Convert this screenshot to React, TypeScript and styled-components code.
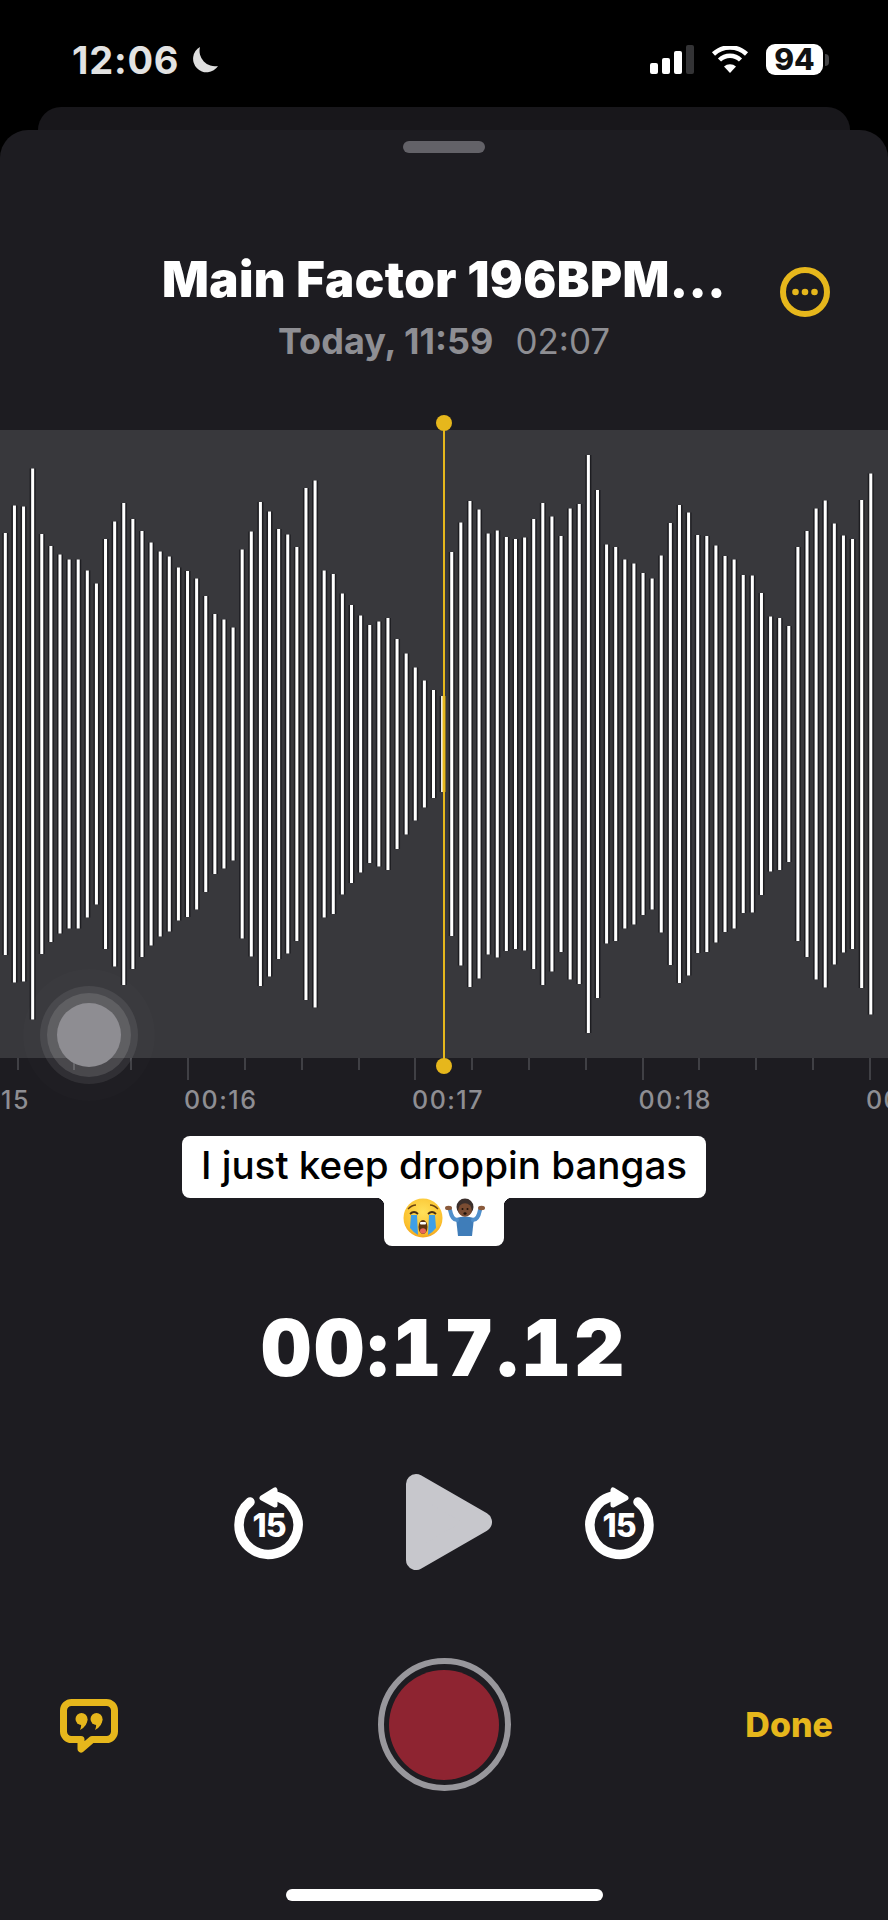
import * as React from 'react'
import styled, { createGlobalStyle } from 'styled-components'

const YELLOW = '#e6b71c'
const SHEET = '#1d1c21'

const GlobalStyle = createGlobalStyle`
  html, body {
    margin: 0;
    background: #000;
  }
  * {
    box-sizing: border-box;
  }
`

const Screen = styled.div`
  width: 888px;
  height: 1920px;
  overflow: hidden;
  display: flex;
  flex-direction: column;
  background: #000;
  font-family: Inter, "Liberation Sans", sans-serif;
`

const StatusBar = styled.div`
  height: 107px;
  flex: none;
  padding: 12px 59px 0 72px;
  display: flex;
  align-items: center;
  justify-content: space-between;
  color: #e2e2e2;
`

const StatusGroup = styled.div`
  display: flex;
  align-items: center;
`

const Clock = styled.span`
  font-size: 38px;
  font-weight: 700;
  letter-spacing: 0.8px;
  margin-right: 10px;
`

const SignalBars = styled.div`
  display: flex;
  align-items: flex-end;
  gap: 4px;
  height: 29px;
  margin-right: 17px;
`

const SignalBar = styled.div<{ $height: number; $off?: boolean }>`
  width: 8px;
  height: ${(p) => p.$height}px;
  border-radius: 2px;
  background: ${(p) => (p.$off ? '#333335' : '#fff')};
`

const Battery = styled.div`
  width: 57px;
  height: 31px;
  margin-left: 17px;
  border-radius: 9px;
  background: #fff;
  color: #111;
  font-size: 30px;
  font-weight: 800;
  line-height: 31px;
  text-align: center;
`

const BatteryNub = styled.div`
  width: 4px;
  height: 12px;
  margin-left: 2px;
  border-radius: 0 6px 6px 0;
  background: #444446;
`

const BackSheet = styled.div`
  height: 23px;
  flex: none;
  margin: 0 38px;
  border-radius: 26px 26px 0 0;
  background: #18171b;
`

const Sheet = styled.div`
  flex: 1;
  display: flex;
  flex-direction: column;
  border-radius: 28px 28px 0 0;
  background: ${SHEET};
`

const Grabber = styled.div`
  width: 82px;
  height: 12px;
  margin: 11px auto 0;
  border-radius: 6px;
  background: #636268;
`

const Header = styled.div`
  margin-top: 99px;
  display: grid;
  grid-template-columns: 1fr auto 1fr;
`

const TitleBlock = styled.div`
  grid-column: 2;
  text-align: center;
`

const Title = styled.div`
  color: #fff;
  font-size: 49px;
  font-weight: 900;
  line-height: 56px;
  letter-spacing: 0.45px;
  white-space: nowrap;
`

const Meta = styled.div`
  margin-top: 13px;
  display: flex;
  justify-content: center;
  align-items: baseline;
  gap: 22px;
  color: #8e8e93;
  font-size: 35px;
  line-height: 40px;
`

const MetaDate = styled.span`
  font-size: 36px;
  font-weight: 700;
`

const MoreButton = styled.svg`
  grid-column: 3;
  justify-self: end;
  width: 50px;
  height: 50px;
  margin: 15px 58px 0 0;
`

const Wave = styled.div`
  position: relative;
  margin-top: 69px;
  height: 628px;
  background: #38383c;
`

const WaveDrawing = styled.svg`
  display: block;
  position: relative;
  overflow: visible;
  z-index: 1;
`

const TouchPoint = styled.div`
  position: absolute;
  z-index: 2;
  left: 57px;
  top: 573px;
  width: 64px;
  height: 64px;
  border-radius: 50%;
  background: #8e8d92;
  box-shadow:
    0 0 0 10px rgba(255, 255, 255, 0.12),
    0 0 0 17px rgba(255, 255, 255, 0.08),
    0 0 0 34px rgba(255, 255, 255, 0.012);
`

const Ruler = styled.div`
  overflow: hidden;
`

const TickRow = styled.div`
  display: flex;
  height: 22px;
  margin-left: -67.7px;
`

const TickCell = styled.div`
  flex: none;
  width: 56.83px;
  display: flex;
  justify-content: center;
`

const Tick = styled.div<{ $major: boolean }>`
  width: 2px;
  height: ${(p) => (p.$major ? 22 : 12)}px;
  background: #404045;
`

const LabelRow = styled.div`
  display: flex;
  margin: 5px 0 0 -120.3px;
`

const TimeLabel = styled.div`
  flex: none;
  width: 227.33px;
  text-align: center;
  color: #8e8e93;
  font-size: 25px;
  font-weight: 500;
  line-height: 30px;
  letter-spacing: 1.5px;
`

const Caption = styled.div`
  margin-top: 21px;
  display: flex;
  flex-direction: column;
  align-items: center;
`

const CaptionLine = styled.div`
  width: 524px;
  height: 62px;
  border-radius: 8px;
  background: #fff;
  color: #000;
  font-size: 38.6px;
  font-weight: 500;
  line-height: 58px;
  text-align: center;
  white-space: nowrap;
`

const EmojiLine = styled.div`
  position: relative;
  width: 120px;
  height: 48px;
  border-radius: 0 0 8px 8px;
  background: #fff;
  display: flex;
  align-items: flex-start;
  justify-content: center;
  gap: 1px;

  &::before,
  &::after {
    content: '';
    position: absolute;
    top: 0;
    width: 8px;
    height: 8px;
  }
  &::before {
    left: -8px;
    background: radial-gradient(circle at 0 100%, transparent 8px, #fff 8.5px);
  }
  &::after {
    right: -8px;
    background: radial-gradient(circle at 100% 100%, transparent 8px, #fff 8.5px);
  }
`

const Timer = styled.div`
  margin-top: 62px;
  color: #fff;
  font-size: 78px;
  font-weight: 900;
  line-height: 80px;
  letter-spacing: 2.8px;
  text-align: center;
  font-variant-numeric: tabular-nums;
`

const Transport = styled.div`
  margin-top: 86px;
  height: 96px;
  display: flex;
  align-items: center;
  justify-content: center;
  gap: 91px;
`

const BottomRow = styled.div`
  margin-top: 88px;
  display: grid;
  grid-template-columns: 1fr auto 1fr;
  align-items: center;
`

const QuoteIcon = styled.svg`
  justify-self: start;
  margin: 2px 0 0 60px;
`

const RecordButton = styled.div`
  width: 133px;
  height: 133px;
  border: 6px solid #98979c;
  border-radius: 50%;
  display: flex;
  align-items: center;
  justify-content: center;
`

const RecordDot = styled.div`
  width: 110px;
  height: 110px;
  border-radius: 50%;
  background: #8e2431;
`

const Done = styled.div`
  justify-self: end;
  margin-right: 55px;
  color: ${YELLOW};
  font-size: 34px;
  font-weight: 800;
`

const HomeBar = styled.div`
  width: 317px;
  height: 12px;
  margin: 98px auto 0;
  border-radius: 6px;
  background: #fff;
`

// bar heights of the loaded slice of the recording, px
const BARS = [
  422, 477, 475, 551, 420, 396, 379, 369, 369, 347, 321, 410, 445, 482, 450, 426, 403, 385, 375,
  353, 346, 331, 296, 260, 249, 233, 389, 425, 484, 465, 430, 419, 394, 512, 527, 347, 340, 301,
  278, 257, 238, 245, 252, 210, 181, 153, 127, 108, 96, 384, 443, 486, 469, 421, 427, 414, 410,
  413, 450, 482, 455, 416, 471, 480, 578, 508, 399, 394, 369, 361, 342, 331, 377, 442, 478, 463,
  418, 416, 397, 376, 369, 338, 337, 302, 255, 252, 236, 394, 426, 471, 487, 441, 417, 410, 488,
  541,
]
const BAR_STEP = 9.11
const WAVE_MID = 314
const PLAYHEAD_X = 444

const Waveform = () => (
  <WaveDrawing width={888} height={628} viewBox="0 0 888 628">
    {BARS.map((h, i) => {
      const x = 5.33 + BAR_STEP * i
      return (
        <g key={i}>
          <rect x={x - 3} y={WAVE_MID - h / 2} width={6} height={h} fill="#17171a" opacity={0.8} />
          <rect x={x - 1.5} y={WAVE_MID - h / 2} width={3} height={h} fill="#fff" />
        </g>
      )
    })}
    <rect x={PLAYHEAD_X - 1} y={-7} width={2} height={644} fill={YELLOW} />
    <rect x={PLAYHEAD_X - 1.5} y={WAVE_MID - 48} width={3} height={96} fill={YELLOW} />
    <circle cx={PLAYHEAD_X} cy={-7} r={8} fill={YELLOW} />
    <circle cx={PLAYHEAD_X} cy={636} r={8} fill={YELLOW} />
  </WaveDrawing>
)

const SkipIcon = ({ forward }: { forward?: boolean }) => (
  <svg width={72} height={84} viewBox="-36 -45 72 84">
    <g transform={forward ? 'scale(-1 1)' : undefined} fill="none" stroke="#fff">
      <path d="M-19 -23 A29.5 29.5 0 1 0 4 -29.2" strokeWidth={9.5} strokeLinecap="round" />
      <path d="M-7 -27 L6 -35 L6 -20 Z" fill="#fff" strokeWidth={5} strokeLinejoin="round" />
    </g>
    <text
      x={0}
      y={12}
      textAnchor="middle"
      fill="#fff"
      fontFamily="Inter, sans-serif"
      fontSize={32}
      fontWeight={800}
      letterSpacing={-1}
    >
      15
    </text>
  </svg>
)

const CryingFace = () => (
  <svg width={40} height={40} viewBox="0 0 40 40">
    <defs>
      <radialGradient id="faceFill" cx="50%" cy="35%" r="70%">
        <stop offset="0%" stopColor="#ffe15a" />
        <stop offset="75%" stopColor="#fbc02d" />
        <stop offset="100%" stopColor="#ef9a1a" />
      </radialGradient>
    </defs>
    <circle cx={20} cy={20} r={19.5} fill="url(#faceFill)" />
    <path d="M5 11 Q9 7 13 7 M35 11 Q31 7 27 7" stroke="#6a4414" strokeWidth={1.4} fill="none" />
    <path d="M7 16 Q11 12 15 16 M25 16 Q29 12 33 16" stroke="#4a2f12" strokeWidth={1.8} fill="none" />
    <path d="M8 17 H14 L15 37 Q11 35 7 30 Z" fill="#3f9fe6" />
    <path d="M26 17 H32 L33 30 Q29 35 25 37 Z" fill="#3f9fe6" />
    <ellipse cx={20} cy={29} rx={4.5} ry={7} fill="#5b3412" />
    <ellipse cx={20} cy={33} rx={3} ry={2.8} fill="#e8685a" />
    <rect x={17} y={24} width={6} height={2.5} rx={1} fill="#fff" />
  </svg>
)

const ShruggingPerson = () => (
  <svg width={42} height={38} viewBox="0 0 42 38">
    <path d="M12 20 Q21 17 30 20 L28 38 H14 Z" fill="#3f7db9" />
    <path d="M13 22 Q8 22 6 12" stroke="#4f8fcb" strokeWidth={4} fill="none" strokeLinecap="round" />
    <path d="M29 22 Q34 22 36 12" stroke="#4f8fcb" strokeWidth={4} fill="none" strokeLinecap="round" />
    <ellipse cx={4.5} cy={10} rx={3.5} ry={2.2} fill="#8a5a3c" />
    <ellipse cx={37.5} cy={10} rx={3.5} ry={2.2} fill="#8a5a3c" />
    <circle cx={21} cy={9} r={8.5} fill="#3a2e2b" />
    <ellipse cx={21} cy={12} rx={6.8} ry={6.8} fill="#7a4c32" />
    <circle cx={18.5} cy={11} r={1} fill="#1d120c" />
    <circle cx={23.5} cy={11} r={1} fill="#1d120c" />
    <ellipse cx={21} cy={15.5} rx={1.6} ry={1.3} fill="#1d120c" />
  </svg>
)

const App = () => {
  return (
    <Screen>
      <GlobalStyle />
      <StatusBar>
        <StatusGroup>
          <Clock>12:06</Clock>
          <svg width={30} height={28} viewBox="0 0 30 28">
            <path d="M11 1 A13.5 13.5 0 1 0 29 20 A15.5 15.5 0 0 1 11 1 Z" fill="#dedede" />
          </svg>
        </StatusGroup>
        <StatusGroup>
          <SignalBars>
            <SignalBar $height={11} />
            <SignalBar $height={16} />
            <SignalBar $height={23} />
            <SignalBar $height={29} $off />
          </SignalBars>
          <svg width={38} height={27} viewBox="0 0 38 27">
            <path d="M19 27 L13 20.5 A9 9 0 0 1 25 20.5 Z" fill="#fff" />
            <path d="M8.5 14 A15 15 0 0 1 29.5 14" stroke="#fff" strokeWidth={4.5} fill="none" />
            <path d="M2.5 8 A24 24 0 0 1 35.5 8" stroke="#fff" strokeWidth={4.5} fill="none" />
          </svg>
          <Battery>94</Battery>
          <BatteryNub />
        </StatusGroup>
      </StatusBar>
      <BackSheet />
      <Sheet>
        <Grabber />
        <Header>
          <TitleBlock>
            <Title>Main Factor 196BPM...</Title>
            <Meta>
              <MetaDate>Today, 11:59</MetaDate>
              <span>02:07</span>
            </Meta>
          </TitleBlock>
          <MoreButton viewBox="0 0 50 50">
            <circle cx={25} cy={25} r={22} stroke={YELLOW} strokeWidth={6} fill="none" />
            <circle cx={15.5} cy={25} r={3.3} fill={YELLOW} />
            <circle cx={25} cy={25} r={3.3} fill={YELLOW} />
            <circle cx={34.5} cy={25} r={3.3} fill={YELLOW} />
          </MoreButton>
        </Header>
        <Wave>
          <Waveform />
          <TouchPoint />
        </Wave>
        <Ruler>
          <TickRow>
            {Array.from({ length: 18 }, (_, i) => (
              <TickCell key={i}>
                <Tick $major={i % 4 === 0} />
              </TickCell>
            ))}
          </TickRow>
          <LabelRow>
            <TimeLabel>00:15</TimeLabel>
            <TimeLabel>00:16</TimeLabel>
            <TimeLabel>00:17</TimeLabel>
            <TimeLabel>00:18</TimeLabel>
            <TimeLabel>00:19</TimeLabel>
          </LabelRow>
        </Ruler>
        <Caption>
          <CaptionLine>I just keep droppin bangas</CaptionLine>
          <EmojiLine>
            <CryingFace />
            <ShruggingPerson />
          </EmojiLine>
        </Caption>
        <Timer>00:17.12</Timer>
        <Transport>
          <SkipIcon />
          <svg width={96} height={96} viewBox="0 0 96 96">
            <path d="M20 10 L86 48 L20 86 Z" fill="#c7c7cc" stroke="#c7c7cc" strokeWidth={20} strokeLinejoin="round" />
          </svg>
          <SkipIcon forward />
        </Transport>
        <BottomRow>
          <QuoteIcon width={58} height={54} viewBox="0 0 58 54">
            <path
              d="M11.5 3.5 H46.5 a8 8 0 0 1 8 8 V32.5 a8 8 0 0 1 -8 8 H32 L21 50 V40.5 H11.5 a8 8 0 0 1 -8 -8 V11.5 a8 8 0 0 1 8 -8 Z"
              fill="none"
              stroke={YELLOW}
              strokeWidth={7}
              strokeLinejoin="round"
            />
            <circle cx={21.5} cy={20} r={6} fill={YELLOW} />
            <path d="M27.5 20 Q27.5 27 20 31 Q22 26 20.5 25 Z" fill={YELLOW} />
            <circle cx={36.5} cy={20} r={6} fill={YELLOW} />
            <path d="M42.5 20 Q42.5 27 35 31 Q37 26 35.5 25 Z" fill={YELLOW} />
          </QuoteIcon>
          <RecordButton>
            <RecordDot />
          </RecordButton>
          <Done>Done</Done>
        </BottomRow>
        <HomeBar />
      </Sheet>
    </Screen>
  )
}

export default App
